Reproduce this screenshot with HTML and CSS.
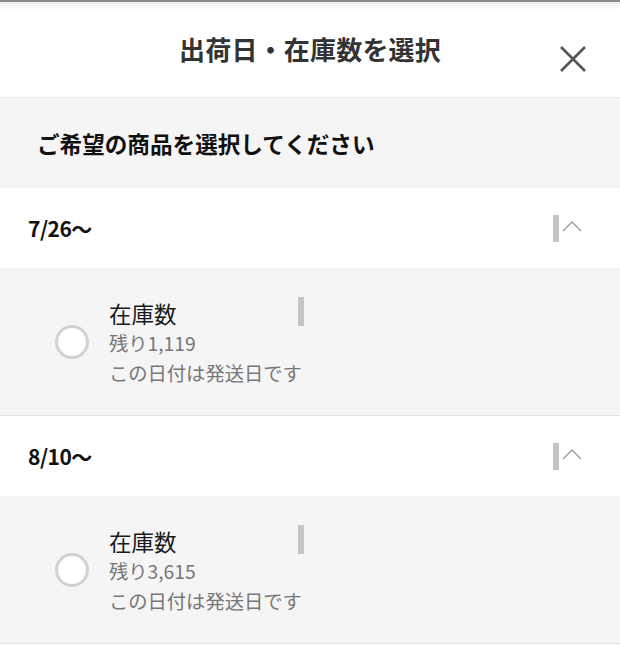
FILE: index.html
```html
<!DOCTYPE html>
<html lang="ja">
<head>
<meta charset="utf-8">
<link rel="stylesheet" href="styles.css">
</head>
<body>
<div class="modal">
  <header class="top">
    <h1 class="title">出荷日・在庫数を選択</h1>
    <button class="close" aria-label="閉じる">
      <svg width="28" height="28" viewBox="0 0 28 28"><path d="M2 2 L26 26 M26 2 L2 26" stroke="#555" stroke-width="2.6" fill="none"/></svg>
    </button>
  </header>
  <div class="intro">ご希望の商品を選択してください</div>

  <section class="group">
    <div class="group-head">
      <span class="date">7/26〜</span>
      <span class="toggle"><span class="bar"></span>
        <svg class="chev" width="20" height="12" viewBox="0 0 20 12"><path d="M1 11 L10 2 L19 11" stroke="#999" stroke-width="1.3" fill="none"/></svg>
      </span>
    </div>
    <div class="group-body">
      <span class="radio"></span>
      <div class="info">
        <div class="row1"><span class="label">在庫数</span><span class="bar"></span></div>
        <div class="sub">残り1,119</div>
        <div class="sub">この日付は発送日です</div>
      </div>
    </div>
  </section>

  <section class="group">
    <div class="group-head">
      <span class="date">8/10〜</span>
      <span class="toggle"><span class="bar"></span>
        <svg class="chev" width="20" height="12" viewBox="0 0 20 12"><path d="M1 11 L10 2 L19 11" stroke="#999" stroke-width="1.3" fill="none"/></svg>
      </span>
    </div>
    <div class="group-body">
      <span class="radio"></span>
      <div class="info">
        <div class="row1"><span class="label">在庫数</span><span class="bar"></span></div>
        <div class="sub">残り3,615</div>
        <div class="sub">この日付は発送日です</div>
      </div>
    </div>
  </section>
</div>
</body>
</html>
```

FILE: styles.css
```css
* { box-sizing: border-box; }
html, body { margin: 0; padding: 0; background: #fff; }
body {
  font-family: "Noto Sans CJK JP", "Noto Sans", sans-serif;
  color: #222;
  width: 620px;
  height: 645px;
  overflow: hidden;
}
.modal { display: flex; flex-direction: column; }
.top {
  position: relative;
  height: 98px;
  border-top: 2px solid #8a8a8a;
  border-bottom: 1px solid #e6e6e6;
  background: linear-gradient(#ececec 0, #fff 8px, #fff 100%);
  display: flex;
  align-items: center;
  justify-content: center;
}
.title {
  margin: 0;
  margin-top: -2px;
  font-size: 26px;
  font-weight: 700;
  color: #333;
  letter-spacing: 0.2px;
}
.close {
  position: absolute;
  right: 33px;
  top: 43px;
  width: 28px;
  height: 28px;
  padding: 0;
  border: none;
  background: none;
  display: block;
}
.close svg { display: block; }
.intro {
  height: 90px;
  background: #f5f5f5;
  padding-left: 37px;
  display: flex;
  align-items: center;
  font-size: 22.6px;
  font-weight: 700;
  color: #111;
}
.group-head {
  height: 80px;
  background: #fff;
  padding: 0 38px 0 28px;
  display: flex;
  align-items: center;
  justify-content: space-between;
}
.date {
  font-size: 21px;
  font-weight: 700;
  color: #111;
  letter-spacing: -0.5px;
}
.toggle { display: flex; align-items: center; gap: 3px; }
.toggle .bar { width: 6px; height: 27px; background: #c4c4c4; display: block; }
.chev { display: block; margin-top: -4px; }
.group-body {
  height: 148px;
  background: #f5f5f5;
  border-bottom: 1px solid #e2e2e2;
  display: flex;
  align-items: center;
  padding-left: 55px;
  gap: 20px;
}
.radio {
  width: 34px;
  height: 34px;
  border-radius: 50%;
  border: 3px solid #d2d2d2;
  background: #fff;
  flex: none;
}
.info { display: flex; flex-direction: column; padding-top: 2px; }
.row1 { display: flex; align-items: center; height: 30px; }
.label { width: 189px; font-size: 22.5px; color: #1a1a1a; }
.row1 .bar { width: 6px; height: 29px; background: #c4c4c4; display: block; margin-top: -3px; }
.sub { font-size: 19.3px; line-height: 30px; color: #777; }
```
